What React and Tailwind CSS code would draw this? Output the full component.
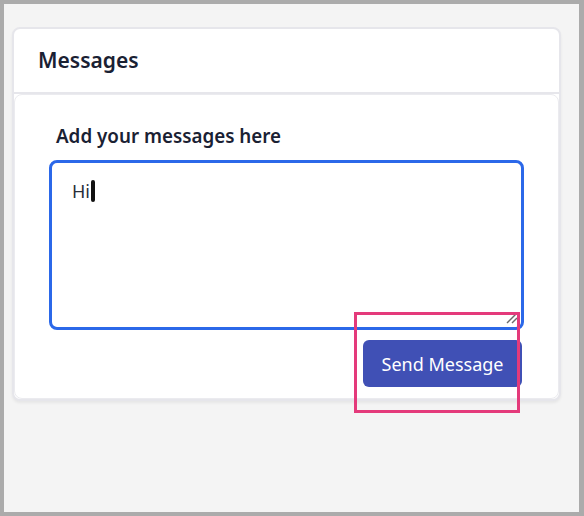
export default function App() {
  const font = { fontFamily: '"Noto Sans", "Open Sans", sans-serif' };
  return (
    <div
      className="relative w-[584px] h-[516px] border-t-[4px] border-l-[4px] border-b-[4px] border-r-[5px] border-[#ababab] bg-[#f4f4f4] pt-[23px] pl-[8px] pr-[18px]"
      style={font}
    >
      <div className="rounded-lg border-2 border-[#e6e6eb] bg-white shadow-[0_2px_3px_rgba(0,0,0,0.06)]">
        <div className="h-[65px] flex items-center px-[24px] border-b-2 border-[#e6e6eb]">
          <h2 className="text-[21px] font-semibold text-[#1a2133] leading-none">Messages</h2>
        </div>
        <div className="rounded-lg border border-[#ebebef] bg-white pt-[29px] pb-[11px] pl-[34px] pr-[34px]">
          <div className="pl-[7px] text-[18.8px] font-semibold text-[#1a2133] leading-[24px] mb-[12px]">
            Add your messages here
          </div>
          <div className="relative h-[170px] rounded-lg border-[3px] border-[#2b68e9] bg-white px-[20px] pt-[15px]">
            <div className="flex items-center text-[18px] text-[#2a2f3a] leading-[26px]">
              <span>Hi</span>
              <span className="inline-block w-[4px] h-[22px] bg-[#111] rounded-[2px] ml-[1px]"></span>
            </div>
            <svg className="absolute right-[3px] bottom-[3px]" width="12" height="12" viewBox="0 0 12 12">
              <line x1="1" y1="11" x2="11" y2="1" stroke="#6b6b6b" strokeWidth="1.5" />
              <line x1="6" y1="11" x2="11" y2="6" stroke="#6b6b6b" strokeWidth="1.5" />
            </svg>
          </div>
          <div className="flex justify-end mt-[10px] pr-[2px]">
            <button className="h-[47px] w-[159px] rounded-md bg-[#4050b5] text-white text-[18px] leading-none">
              Send Message
            </button>
          </div>
        </div>
      </div>
      <div className="absolute left-[350px] top-[308px] w-[166px] h-[101px] border-[3px] border-[#e43a7b] pointer-events-none"></div>
    </div>
  );
}
